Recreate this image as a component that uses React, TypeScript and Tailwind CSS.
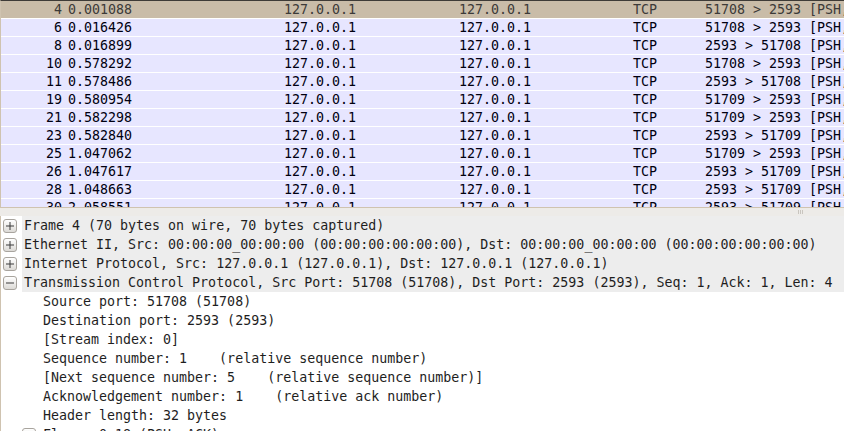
import React from "react";

const rows: [string, string, string][] = [
  ["4", "0.001088", "51708 > 2593 [PSH, ACK] Seq=1 Ack=1 Win=32792 Len=4 TSval=1 TSecr=1"],
  ["6", "0.016426", "51708 > 2593 [PSH, ACK] Seq=5 Ack=5 Win=32792 Len=20 TSval=5 TSecr=5"],
  ["8", "0.016899", "2593 > 51708 [PSH, ACK] Seq=5 Ack=25 Win=32768 Len=12 TSval=5 TSecr=5"],
  ["10", "0.578292", "51708 > 2593 [PSH, ACK] Seq=25 Ack=17 Win=32792 Len=8 TSval=146 TSecr=5"],
  ["11", "0.578486", "2593 > 51708 [PSH, ACK] Seq=17 Ack=33 Win=32768 Len=8 TSval=146 TSecr=146"],
  ["19", "0.580954", "51709 > 2593 [PSH, ACK] Seq=1 Ack=1 Win=32792 Len=4 TSval=147 TSecr=147"],
  ["21", "0.582298", "51709 > 2593 [PSH, ACK] Seq=5 Ack=5 Win=32792 Len=20 TSval=147 TSecr=147"],
  ["23", "0.582840", "2593 > 51709 [PSH, ACK] Seq=5 Ack=25 Win=32768 Len=12 TSval=147 TSecr=147"],
  ["25", "1.047062", "51709 > 2593 [PSH, ACK] Seq=25 Ack=17 Win=32792 Len=8 TSval=263 TSecr=147"],
  ["26", "1.047617", "2593 > 51709 [PSH, ACK] Seq=17 Ack=33 Win=32768 Len=8 TSval=263 TSecr=263"],
  ["28", "1.048663", "2593 > 51709 [PSH, ACK] Seq=25 Ack=33 Win=32768 Len=8 TSval=263 TSecr=263"],
  ["30", "2.058551", "2593 > 51709 [PSH, ACK] Seq=33 Ack=33 Win=32768 Len=8 TSval=516 TSecr=263"],
];

function Expander({ open }: { open: boolean }) {
  return (
    <div className="w-[14px] h-[14px] rounded-[3px] border border-[#a8a49e] bg-gradient-to-b from-[#ffffff] to-[#dcdad6] flex items-center justify-center">
      <svg width="8" height="8" viewBox="0 0 8 8">
        <rect x="0" y="3.5" width="8" height="1" fill="#3a3a3a" />
        {!open && <rect x="3.5" y="0" width="1" height="8" fill="#3a3a3a" />}
      </svg>
    </div>
  );
}

const top = [
  { t: "Frame 4 (70 bytes on wire, 70 bytes captured)", open: false },
  { t: "Ethernet II, Src: 00:00:00_00:00:00 (00:00:00:00:00:00), Dst: 00:00:00_00:00:00 (00:00:00:00:00:00)", open: false },
  { t: "Internet Protocol, Src: 127.0.0.1 (127.0.0.1), Dst: 127.0.0.1 (127.0.0.1)", open: false },
  { t: "Transmission Control Protocol, Src Port: 51708 (51708), Dst Port: 2593 (2593), Seq: 1, Ack: 1, Len: 4", open: true },
];

const children = [
  "Source port: 51708 (51708)",
  "Destination port: 2593 (2593)",
  "[Stream index: 0]",
  "Sequence number: 1    (relative sequence number)",
  "[Next sequence number: 5    (relative sequence number)]",
  "Acknowledgement number: 1    (relative ack number)",
  "Header length: 32 bytes",
];

export default function App() {
  return (
    <div
      className="w-[844px] h-[431px] overflow-hidden bg-[#edebe8] flex flex-col text-[13.3px]"
      style={{ fontFamily: '"DejaVu Sans Mono", monospace' }}
    >
      {/* packet list */}
      <div className="h-[208px] shrink-0 overflow-hidden border-t border-[#3e3b37] border-l border-l-[#cfc3b0] border-b border-b-[#cfc3b0] bg-white">
        {rows.map(([no, time, info], i) => {
          const sel = i === 0;
          return (
            <div
              key={no}
              className={`grid grid-cols-[63px_216px_175px_174px_72px_1fr] h-[18px] leading-[17px] border-b border-white whitespace-nowrap ${
                sel ? "bg-[#c9bca8] text-[#3c3a38]" : "bg-[#e7e6ff] text-[#000010]"
              }`}
            >
              <div className="text-right pr-[2px]">{no}</div>
              <div className="pl-[4px]">{time}</div>
              <div className="pl-[4px]">127.0.0.1</div>
              <div className="pl-[4px]">127.0.0.1</div>
              <div className="pl-[4px]">TCP</div>
              <div className="pl-[4px] overflow-hidden">{info}</div>
            </div>
          );
        })}
      </div>
      {/* splitter */}
      <div className="h-[8px] shrink-0 flex justify-end items-center pr-[41px]">
        <div className="flex gap-[1px]">
          <div className="w-[1px] h-[4px] bg-[#c9c5bf]" />
          <div className="w-[1px] h-[4px] bg-[#c9c5bf]" />
          <div className="w-[1px] h-[4px] bg-[#c9c5bf]" />
        </div>
      </div>
      {/* details tree */}
      <div className="flex-1 bg-white border-l border-[#cfc3b0] overflow-hidden text-[#1e1e1e] whitespace-pre">
        {top.map((r) => (
          <div key={r.t} className="flex h-[19px] items-center">
            <div className="w-[21px] shrink-0 flex items-center pl-[2px]">
              <Expander open={r.open} />
            </div>
            <div className="flex-1 h-[19px] leading-[19px] bg-[#ededed] pl-[2px] overflow-hidden">{r.t}</div>
          </div>
        ))}
        {children.map((c) => (
          <div key={c} className="h-[19px] leading-[19px] pl-[42px]">
            {c}
          </div>
        ))}
        <div className="flex h-[19px] items-center">
          <div className="w-[42px] shrink-0 flex items-center pl-[21px]">
            <Expander open={false} />
          </div>
          <div className="leading-[19px]">Flags: 0x18 (PSH, ACK)</div>
        </div>
      </div>
    </div>
  );
}
